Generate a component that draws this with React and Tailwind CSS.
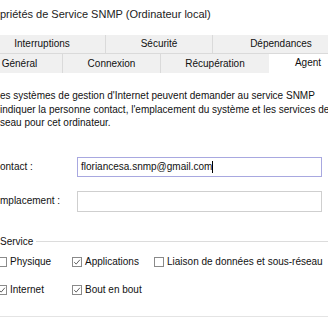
import React from 'react'

const font = { fontFamily: '"Liberation Sans", Arial, sans-serif' }

function Check({ checked }) {
  return (
    <span className="w-[10px] h-[10px] shrink-0 border border-[#8a8a8a] bg-white flex items-center justify-center">
      {checked && (
        <svg viewBox="0 0 10 10" className="w-[8px] h-[8px]">
          <path d="M1.5 5.2 L4 7.6 L8.6 2.2" fill="none" stroke="#4a4a4a" strokeWidth="1.1" />
        </svg>
      )}
    </span>
  )
}

function Option({ label, checked, box = 'w-[82px]' }) {
  return (
    <div className={`flex items-center gap-[3px] shrink-0 ${box}`}>
      <Check checked={checked} />
      <span>{label}</span>
    </div>
  )
}

export default function App() {
  return (
    <div
      className="w-[328px] h-[320px] overflow-hidden bg-white text-[10px] text-[#111] leading-none whitespace-nowrap"
      style={font}
    >
      {/* Title */}
      <div className="h-[35px] pt-[9px] text-[11px] text-[#222]">
        priétés de Service SNMP (Ordinateur local)
      </div>

      {/* Tab rows */}
      <div className="flex h-[19px] -ml-[21px] bg-[#f0f0f0] border-b border-[#dadada]">
        <div className="w-[127px] shrink-0 flex items-center justify-center border-r border-[#dadada]">Interruptions</div>
        <div className="w-[107px] shrink-0 flex items-center justify-center border-r border-[#dadada]">Sécurité</div>
        <div className="w-[136px] shrink-0 flex items-center justify-center">Dépendances</div>
      </div>
      <div className="flex h-[19px] -ml-[23px]">
        <div className="w-[86px] shrink-0 flex items-center justify-center bg-[#f0f0f0] border-r border-[#dadada]">Général</div>
        <div className="w-[98px] shrink-0 flex items-center justify-center bg-[#f0f0f0] border-r border-[#dadada]">Connexion</div>
        <div className="w-[108px] shrink-0 flex items-center justify-center bg-[#f0f0f0]">Récupération</div>
        <div className="w-[78px] shrink-0 flex items-center justify-center bg-white pb-[2px]">Agent</div>
      </div>

      {/* Body */}
      <div className="pt-[16px] leading-[13.5px]">
        <div>es systèmes de gestion d'Internet peuvent demander au service SNMP</div>
        <div>indiquer la personne contact, l'emplacement du système et les services de</div>
        <div>seau pour cet ordinateur.</div>
      </div>

      <div className="mt-[27px] flex items-center h-[20px]">
        <span className="w-[77px] shrink-0">ontact :</span>
        <div className="w-[245px] h-[20px] shrink-0 border border-[#a8a8e0] flex items-center pl-[3px]">
          floriancesa.snmp@gmail.com
          <span className="w-px h-[12px] bg-black" />
        </div>
      </div>

      <div className="mt-[14px] flex items-center h-[21px]">
        <span className="w-[77px] shrink-0">mplacement :</span>
        <div className="w-[245px] h-[21px] shrink-0 border border-[#cfcfcf]" />
      </div>

      {/* Service group */}
      <div className="mt-[24px] flex items-center h-[12px]">
        <span className="pr-[3px]">Service</span>
        <div className="flex-1 h-px bg-[#dcdcdc]" />
      </div>
      <div className="mt-[8px] flex items-center h-[12px] -ml-[3px]">
        <Option label="Physique" box="w-[75px]" />
        <Option label="Applications" checked />
        <Option label="Liaison de données et sous-réseau" box="" />
      </div>
      <div className="mt-[16px] flex items-center h-[12px] -ml-[3px]">
        <Option label="Internet" checked box="w-[75px]" />
        <Option label="Bout en bout" checked />
      </div>
      <div className="mt-[20px] h-px bg-[#e4e4e4]" />
    </div>
  )
}
